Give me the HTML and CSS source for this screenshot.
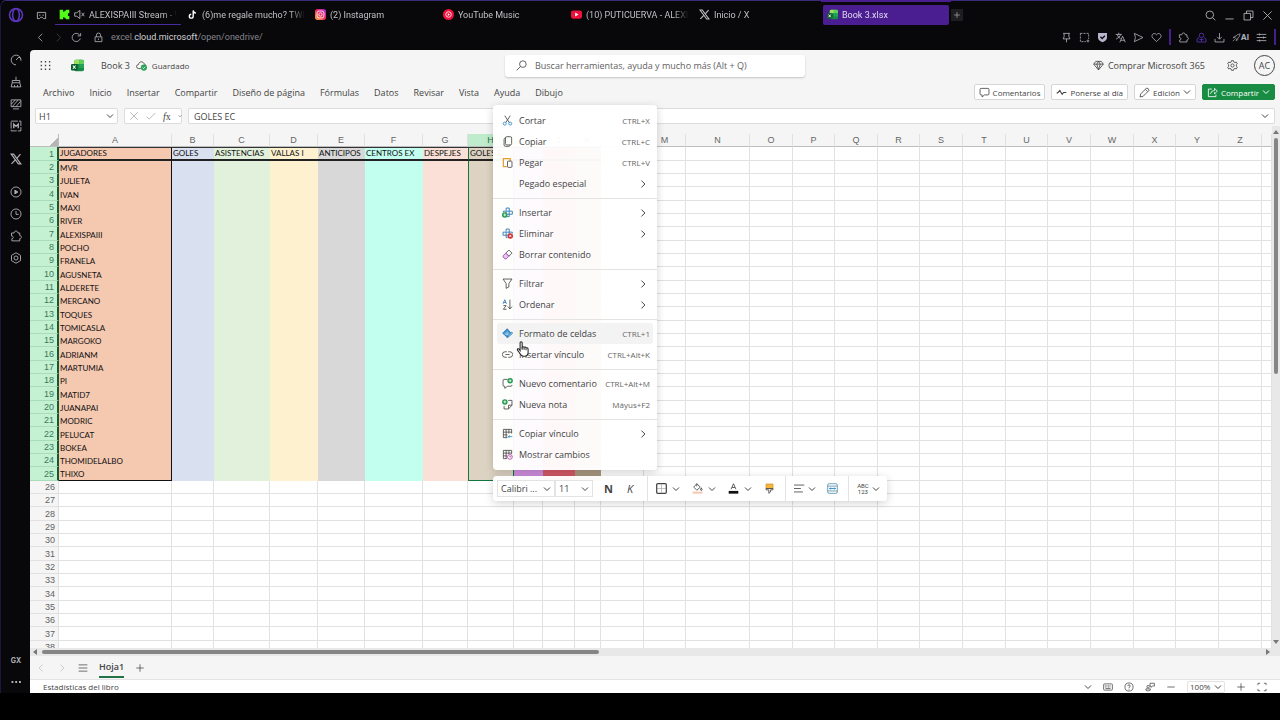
FILE: index.html
```html
<!DOCTYPE html>
<html lang="es">

<head>
  <meta charset="UTF-8">
  <meta name="viewport" content="width=device-width, initial-scale=1.0">
  <title>Book 3.xlsx</title>
  <link rel="stylesheet" href="styles.css">
</head>

<body>

  <!-- iconos -->
  <svg class="sprite" aria-hidden="true">
    <symbol id="opera" viewBox="0 0 16 16"><circle cx="8" cy="8" r="6.5"/><ellipse cx="8" cy="8" rx="3.4" ry="6.3"/></symbol>
    <symbol id="mask" viewBox="0 0 16 16"><path d="M2 3.5h12v9h-3l-2-2H7l-2 2H2z"/><path d="M4.5 7.5h2M9.5 7.5h2"/></symbol>
    <symbol id="down" viewBox="0 0 16 16"><path d="M2 5l6 6 6-6"/></symbol>
    <symbol id="left" viewBox="0 0 16 16"><path d="M10.5 2.5L5 8l5.5 5.5"/></symbol>
    <symbol id="right" viewBox="0 0 16 16"><path d="M5.5 2.5L11 8l-5.5 5.5"/></symbol>
    <symbol id="reload" viewBox="0 0 16 16"><path d="M13.5 9.5A6 6 0 1 1 12 3.7l1.7 1.7M14 1.5v4.200H9.5"/></symbol>
    <symbol id="lock" viewBox="0 0 16 16"><path d="M3 7h10v7H3zM5 7V4.5a3 3 0 0 1 6 0V7M8 9.5v2"/></symbol>
    <symbol id="plus" viewBox="0 0 16 16"><path d="M8 2v12M2 8h12"/></symbol>
    <symbol id="minus" viewBox="0 0 16 16"><path d="M2 8h12"/></symbol>
    <symbol id="close" viewBox="0 0 16 16"><path d="M2 2l12 12M14 2L2 14"/></symbol>
    <symbol id="check" viewBox="0 0 16 16"><path d="M1 9l4 4L15 3"/></symbol>
    <symbol id="search" viewBox="0 0 16 16"><circle cx="7" cy="7" r="5.5"/><path d="M11 11l4 4"/></symbol>
    <symbol id="lens" viewBox="0 0 16 16"><circle cx="10" cy="6" r="4.8"/><path d="M6.5 9.5L1 15"/></symbol>
    <symbol id="minimize" viewBox="0 0 16 16"><path d="M2 13h12"/></symbol>
    <symbol id="restore" viewBox="0 0 16 16"><path d="M1.500 5h9.500v9.500H1.500zM5 5V1.500h9.500V11H11"/></symbol>
    <symbol id="pin" viewBox="0 0 16 16"><path d="M3 2h10M4.500 2v5L3 10h10l-1.500-3V2M8 10v5"/></symbol>
    <symbol id="crop" viewBox="0 0 16 16"><path d="M2 2h12v8M2 2v12h8" stroke-dasharray="3 1.500"/><path d="M13 11v4M11 13h4"/></symbol>
    <symbol id="shield" viewBox="0 0 16 16"><path d="M1.500 1.500h13v7q0 4-6.500 6.500Q1.500 12.500 1.500 8.500z" fill="#b9b5cc" stroke="none"/><path d="M5 7l2.500 2.500L11.500 5.500" stroke="#0a090d" stroke-width="1.800"/></symbol>
    <symbol id="translate" viewBox="0 0 16 16"><path d="M1 3.500h9M5.500 1v2.500M8.500 3.500Q7 8 1.500 10.500M3 3.500Q4.500 8 8 9.500M7 15l4-9 4 9M8.500 12h5"/></symbol>
    <symbol id="send" viewBox="0 0 16 16"><path d="M2 2l12.500 6L2 14l1.500-6z"/></symbol>
    <symbol id="heart" viewBox="0 0 16 16"><path d="M8 14L2.500 8.500C-1 4.500 4.500-.5 8 4c3.500-4.500 9 .5 5.500 4.500z"/></symbol>
    <symbol id="puzzle" viewBox="0 0 16 16"><path d="M2 4h3.500c0-3.500 5-3.500 5 0H13v3.500c3 0 3 4 0 4V14.500H2.500V11.500c2.500 0 2.500-3.500-.5-3.500z"/></symbol>
    <symbol id="user" viewBox="0 0 16 16"><circle cx="8" cy="5" r="3.300"/><path d="M4.500 8L1.500 10v4.500h13V10l-3-2M5 11h6M8 9.500v4"/></symbol>
    <symbol id="download" viewBox="0 0 16 16"><path d="M8 1.500V10M4.500 7L8 10.500 11.500 7M1.500 10v4.500h13V10"/></symbol>
    <symbol id="rocket" viewBox="0 0 16 16"><path d="M14.500 1.500Q8 2 5 8l3 3q6-3 6.500-9.500zM5 8L2 8.500 5.500 4.500M8 11l-.5 3 4-3.500M1.500 14.500L5 11"/></symbol>
    <symbol id="sliders" viewBox="0 0 16 16"><path d="M1 3.500h14M1 8h14M1 12.500h14M5 2v3M11 6.500v3M5 11v3"/></symbol>
    <symbol id="speed" viewBox="0 0 16 16"><path d="M14.500 9A6.500 6.500 0 1 0 8 14.500M8 8l4-4M12 4l2.500 2.500"/></symbol>
    <symbol id="broom" viewBox="0 0 16 16"><path d="M8 1v5M3 6h10v3H3zM3 9l-1.500 5.500h13L13 9M6 14.500V12M10 14.500V12"/></symbol>
    <symbol id="hatch" viewBox="0 0 16 16"><path d="M1.500 2.500h13v9h-13zM2 8l5-5.500M3 11.500l8-9M8 11.500l6-7M4 14.500h8"/></symbol>
    <symbol id="mbox" viewBox="0 0 16 16"><path d="M1.500 1.500h13v13h-13z" stroke-dasharray="9 1.500"/><path d="M5 11V5.500l3 3 3-3V11" stroke-width="1.800"/></symbol>
    <symbol id="xlogo" viewBox="0 0 16 16"><path d="M1.500 1.500h3.300l9.700 13h-3.300z" stroke-width="1.600"/><path d="M14 1.500L9 7.200M7 9.200l-5 5.300" stroke-width="1.600"/></symbol>
    <symbol id="player" viewBox="0 0 16 16"><circle cx="8" cy="8" r="6.700"/><path d="M6.500 5.500v5l4-2.500z" fill="currentColor"/></symbol>
    <symbol id="clock" viewBox="0 0 16 16"><circle cx="8" cy="8" r="6.700"/><path d="M8 4v4.500h3.500"/></symbol>
    <symbol id="hex" viewBox="0 0 16 16"><path d="M8 1l6 3.500v7L8 15l-6-3.500v-7z"/><circle cx="8" cy="8" r="2.700"/></symbol>
    <symbol id="gear" viewBox="0 0 16 16"><path d="M6.500 1h3l.5 2 1.500.8 2-.8 1.500 2.600L13.500 7v2l1.500 1.400-1.500 2.600-2-.8-1.500.8-.5 2h-3L6 13l-1.500-.8-2 .8L1 10.400 2.500 9V7L1 5.600 2.500 3l2 .8L6 3z"/><circle cx="8" cy="8" r="2.300"/></symbol>
    <symbol id="dots" viewBox="0 0 16 16"><path d="M2 8h2.500M7 8h2.500M12 8h2.500" stroke-width="2.500"/></symbol>
    <symbol id="waffle" viewBox="0 0 16 16"><path d="M1 2.500h2M7 2.500h2M13 2.500h2M1 8h2M7 8h2M13 8h2M1 13.500h2M7 13.500h2M13 13.500h2" stroke-width="2.200"/></symbol>
    <symbol id="excel" viewBox="0 0 16 16"><g stroke="none"><rect x="4" y="1" width="12" height="14" rx="2" fill="#178a45"/><path d="M6 1h4v5H4V3q0-2 2-2z" fill="#9be05c"/><path d="M10 1h4q2 0 2 2v3h-6z" fill="#5fcf5a"/><path d="M10 6h6v5h-6z" fill="#23a455"/><rect y="6" width="8" height="8" rx="1.500" fill="#0b5c2d"/></g><path d="M2.300 8l3.400 4M5.700 8l-3.400 4" stroke="#fff" stroke-width="1.300"/></symbol>
    <symbol id="kick" viewBox="0 0 16 16"><path d="M1 1h5v3h2V2.500h2V1h5v5h-2v4h2v5h-5v-1.500H8V12H6v3H1z" fill="#53fc18" stroke="none"/></symbol>
    <symbol id="mute" viewBox="0 0 16 16"><path d="M1 5.500h3L8.500 2v12L4 10.500H1zM11 5.500l4 5M15 5.500l-4 5"/></symbol>
    <symbol id="tiktok" viewBox="0 0 16 16"><path d="M9 2v8.500a2.800 2.800 0 1 1-2.800-2.800M9 2q.5 3.500 4 4" stroke="#fff" stroke-width="2"/></symbol>
    <symbol id="insta" viewBox="0 0 16 16"><defs><linearGradient id="ig" x1="0" y1="1" x2="1" y2="0"><stop offset="0" stop-color="#ffb52e"/><stop offset=".5" stop-color="#f3265f"/><stop offset="1" stop-color="#a02be0"/></linearGradient></defs><rect width="16" height="16" rx="4" fill="url(#ig)" stroke="none"/><rect x="3" y="3" width="10" height="10" rx="3" stroke="#fff"/><circle cx="8" cy="8" r="2.400" stroke="#fff"/></symbol>
    <symbol id="ytm" viewBox="0 0 16 16"><circle cx="8" cy="8" r="8" fill="#f0103c" stroke="none"/><circle cx="8" cy="8" r="4" stroke="#fff"/><path d="M7 6v4l3-2z" fill="#fff" stroke="none"/></symbol>
    <symbol id="yt" viewBox="0 0 16 16"><rect y="2" width="16" height="12" rx="3" fill="#f0103c" stroke="none"/><path d="M6 5v6l5-3z" fill="#fff" stroke="none"/></symbol>
    <symbol id="saved" viewBox="0 0 16 16"><path d="M7 12.500H4a3 3 0 0 1-.3-6C4 1.500 11 1.500 12 6q1.500.3 2.300 1.500"/><circle cx="11.500" cy="11" r="4.500" fill="#2aa45a" stroke="none"/><path d="M9.500 11l1.500 1.500L13.500 10" stroke="#fff"/></symbol>
    <symbol id="gem" viewBox="0 0 16 16"><path d="M4 2h8l3 4-7 8.500L1 6zM1 6h14M5.500 6L8 14l2.500-8M5.500 6L8 2l2.500 4"/></symbol>
    <symbol id="chat" viewBox="0 0 16 16"><path d="M3 2h10q1.500 0 1.500 1.500V10q0 1.500-1.500 1.500H8L4.500 14.500v-3H3Q1.500 11.500 1.500 10V3.500Q1.500 2 3 2z"/></symbol>
    <symbol id="pulse" viewBox="0 0 16 16"><path d="M1 9l2-1L5.500 5l3.500 5.500L11 8h4" stroke-width="1.600"/></symbol>
    <symbol id="pencil" viewBox="0 0 16 16"><path d="M1.500 14.500l1-4.500L11 1.500q3 0 3.500 3.500L6 13.500zM9.500 3.500l3 3"/></symbol>
    <symbol id="share" viewBox="0 0 16 16"><path d="M7 3H2v11h11v-3M5 10q1-5 6-5V2l4 4-4 4V7.500"/></symbol>
    <symbol id="lines" viewBox="0 0 16 16"><path d="M1 3h14M1 8h14M1 13h14"/></symbol>
    <symbol id="cut" viewBox="0 0 16 16"><path d="M4 1l6.500 10M12 1L5.500 11"/><g stroke="#2b8ac9"><circle cx="4" cy="12.500" r="2.200"/><circle cx="12" cy="12.500" r="2.200"/></g></symbol>
    <symbol id="copy" viewBox="0 0 16 16"><rect x="5" y="1" width="9" height="12" rx="2"/><path d="M5 3Q3 3 3 5v8q0 2 2 2h5q1.500 0 2-2"/></symbol>
    <symbol id="paste" viewBox="0 0 16 16"><path d="M7 14H2V2.500h10V6M5 2.500h4" stroke="#e8a02c" stroke-width="1.800"/><rect x="8" y="6" width="6.500" height="9" rx="1" fill="#fff"/></symbol>
    <symbol id="ins" viewBox="0 0 16 16"><path d="M6 5V1.500h4.500V6H15v4.500h-4.500V14H6.500M6 6H2v2M6 6h4.500v4.500H6z" stroke="#2b76b5" stroke-width="1.300"/><circle cx="4" cy="11.500" r="4" fill="#23994d" stroke="none"/><path d="M4 9.500v4M2 11.500h4" stroke="#fff"/></symbol>
    <symbol id="del" viewBox="0 0 16 16"><path d="M6 5V1.500h4.500V6H15v2M6 6H1.500v4.500H6V14h2M6 6h4.500v4.500H6z" stroke="#2b76b5" stroke-width="1.300"/><circle cx="12" cy="11.500" r="4" fill="#d13438" stroke="none"/><path d="M10.500 10l3 3M13.500 10l-3 3" stroke="#fff"/></symbol>
    <symbol id="erase" viewBox="0 0 16 16"><path d="M10 1.500l4.500 4.500-4.500 4.500-4.500-4.500z"/><path d="M5.500 6l4.500 4.500-4 4H4.500L1.500 11.500V10z" fill="#e6c4ec" stroke="#a03fb5"/></symbol>
    <symbol id="filter" viewBox="0 0 16 16"><path d="M1.500 1.500h13L10 8v5l-4 2V8z"/></symbol>
    <symbol id="sort" viewBox="0 0 16 16"><path d="M1.500 7L4 1l2.500 6M2.300 5h3.400" stroke="#2b76b5"/><path d="M2 9.500h4L2 15h4.500M11.500 1v13M8.500 11l3 3.500 3-3.500"/></symbol>
    <symbol id="format" viewBox="0 0 16 16"><path d="M7.500 1l5.500 6.500-5.500 6L1 7.500z" fill="#2f8dcc" stroke="#2b76b5"/><path d="M3.500 7.500h8M7.500 4v7M4 9.500h7" stroke="#d8ecf8" stroke-width=".8"/><path d="M7.500 14l1-3L14 6l1.500 1.500-5.500 5z" fill="#9fd0ee" stroke="#2b76b5"/></symbol>
    <symbol id="link" viewBox="0 0 16 16"><path d="M7 4H4.500a4 4 0 0 0 0 8H7M9 4h2.500a4 4 0 0 1 0 8H9M5 8h6"/></symbol>
    <symbol id="comment" viewBox="0 0 16 16"><path d="M8 2H3Q1.500 2 1.500 4v6q0 2 1.500 2h1v3l4-3h5q1.500 0 1.500-2"/><circle cx="11.800" cy="4" r="4" fill="#23994d" stroke="none"/><path d="M11.800 2v4M9.800 4h4" stroke="#fff"/></symbol>
    <symbol id="note" viewBox="0 0 16 16"><path d="M9 2h5.500v7L9.500 14.500H3V10M14.500 9h-5v5"/><circle cx="4.200" cy="4.200" r="4" fill="#23994d" stroke="none"/><path d="M4.200 2.200v4M2.200 4.200h4" stroke="#fff"/></symbol>
    <symbol id="tablelink" viewBox="0 0 16 16"><path d="M8 14H2V2h12v6M2 6h12M2 10h6M6 2v12M10 2v6"/><path d="M9 12.500h6M11 10.500l-2 2 2 2" stroke="#2b8ac9"/></symbol>
    <symbol id="changes" viewBox="0 0 16 16"><path d="M7 14H2V2h12v5M2 6h12M2 10h5M6 2v12M10 2v5"/><circle cx="11.500" cy="11.500" r="3.500" fill="#fff" stroke="#b03fa5"/><path d="M11.500 9.500v2h2" stroke="#b03fa5"/></symbol>
    <symbol id="borders" viewBox="0 0 16 16"><path d="M8 2v12M2 8h12" stroke="#b5b5b5"/><rect x="1" y="1" width="14" height="14" rx="1.500" stroke-width="1.800"/></symbol>
    <symbol id="fill" viewBox="0 0 16 16"><path d="M7 1l5 5-5 4.500L2.500 6zM7 1v4M13.500 7q2.500 4 0 4t0-4"/><path d="M1 14h14" stroke="#f5c8b0" stroke-width="3"/></symbol>
    <symbol id="color" viewBox="0 0 16 16"><path d="M4.500 9L8 1l3.500 8M5.800 6.500h4.400"/><path d="M1 13.500h14" stroke="#111" stroke-width="4"/></symbol>
    <symbol id="brush" viewBox="0 0 16 16"><path d="M3 1.500h10V8H3z" fill="#f5b83d" stroke="#d9932a"/><path d="M3 8h10v2H9.500v3L7 15v-5H3z"/></symbol>
    <symbol id="align" viewBox="0 0 16 16"><path d="M0 3h15M0 8h10M0 13h13"/></symbol>
    <symbol id="merge" viewBox="0 0 16 16"><rect x="1" y="1" width="14" height="14" rx="2" stroke="#5a8ea8"/><path d="M1 4.500h14M1 11.500h14" stroke="#5a8ea8"/><path d="M3.500 8h9M5.500 6.500L4 8l1.500 1.500M10.500 6.500L12 8l-1.500 1.500" stroke="#1c84c6"/></symbol>
    <symbol id="keyboard" viewBox="0 0 16 16"><rect x="1" y="3" width="14" height="10" rx="1.500"/><path d="M3 6h10M3 8h10" stroke-dasharray="1.500 1"/><path d="M4 10.500h8"/></symbol>
    <symbol id="help" viewBox="0 0 16 16"><circle cx="8" cy="8" r="6.500"/><path d="M6 6.500q0-2 2-2t2 2q0 1-2 2.200V10M8 11v1.200"/></symbol>
    <symbol id="feedback" viewBox="0 0 16 16"><circle cx="5" cy="7.500" r="2"/><path d="M1.500 11h7v2q-3.500 3-7 0zM8 2h7v4.500h-3L9.500 8.500V6.500H8z"/></symbol>
    <symbol id="full" viewBox="0 0 16 16"><path d="M1.500 5V2H5M11 2h3.500v3M14.500 11v3H11M5 14H1.500v-3"/></symbol>
    <symbol id="hand" viewBox="0 0 16 20"><path d="M5 12V2.500q0-1.500 1.300-1.500T7.600 2.500V8q1-1.500 2.400 0 1.300-1 2.400.5 2.600-.5 2.600 2V14q0 5-4.500 5H9q-2.500 0-4-3l-3.500-5q0-2 2-1z" fill="#fff" stroke="#222" stroke-width="1.300"/><path d="M7.600 8v3M10 8.500V11M12.400 9v2.500" stroke="#222"/></symbol>
  </svg>

  <div class="browser">
    <aside class="sidebar">
      <button class="logo" aria-label="Opera"><svg><use href="#opera"/></svg></button>
      <button aria-label="Velocidad"><svg><use href="#speed"/></svg></button>
      <button aria-label="Limpiar"><svg><use href="#broom"/></svg></button>
      <button aria-label="Fondos"><svg><use href="#hatch"/></svg></button>
      <button aria-label="Mods"><svg><use href="#mbox"/></svg></button>
      <button class="apart" aria-label="X"><svg><use href="#xlogo"/></svg></button>
      <button class="apart" aria-label="Reproductor"><svg><use href="#player"/></svg></button>
      <button aria-label="Historial"><svg><use href="#clock"/></svg></button>
      <button aria-label="Extensiones"><svg><use href="#puzzle"/></svg></button>
      <button aria-label="Ajustes"><svg><use href="#hex"/></svg></button>
      <button class="bottom">GX</button>
      <button aria-label="Más"><svg><use href="#dots"/></svg></button>
    </aside>

    <div class="window">
      <div class="tabs">
        <button class="mask" aria-label="Privado"><svg><use href="#mask"/></svg></button>
        <a class="tab playing" href="#"><svg><use href="#kick"/></svg><svg class="mute"><use href="#mute"/></svg><span>ALEXISPAIII Stream - W</span></a>
        <a class="tab" href="#"><svg><use href="#tiktok"/></svg><span>(6)me regale mucho? TWI</span></a>
        <a class="tab" href="#"><svg><use href="#insta"/></svg><span>(2) Instagram</span></a>
        <a class="tab" href="#"><svg><use href="#ytm"/></svg><span>YouTube Music</span></a>
        <a class="tab" href="#"><svg><use href="#yt"/></svg><span>(10) PUTICUERVA - ALEXI</span></a>
        <a class="tab" href="#"><svg><use href="#xlogo"/></svg><span>Inicio / X</span></a>
        <a class="tab active" href="#"><svg><use href="#excel"/></svg><span>Book 3.xlsx</span></a>
        <button class="new-tab" aria-label="Nueva pestaña"><svg><use href="#plus"/></svg></button>
        <div class="win-buttons">
          <button aria-label="Buscar"><svg><use href="#search"/></svg></button>
          <button aria-label="Minimizar"><svg><use href="#minimize"/></svg></button>
          <button aria-label="Restaurar"><svg><use href="#restore"/></svg></button>
          <button aria-label="Cerrar"><svg><use href="#close"/></svg></button>
        </div>
      </div>

      <div class="address">
        <button aria-label="Atrás"><svg><use href="#left"/></svg></button>
        <button class="dim" aria-label="Adelante"><svg><use href="#right"/></svg></button>
        <button aria-label="Recargar"><svg><use href="#reload"/></svg></button>
        <button class="lock" aria-label="Seguridad"><svg><use href="#lock"/></svg></button>
        <a class="url" href="#">excel.<b>cloud.microsoft</b>/open/onedrive/</a>
        <button aria-label="Fijar"><svg><use href="#pin"/></svg></button>
        <button aria-label="Captura"><svg><use href="#crop"/></svg></button>
        <button aria-label="Bloqueador"><svg><use href="#shield"/></svg></button>
        <button aria-label="Traducir"><svg><use href="#translate"/></svg></button>
        <button aria-label="Enviar"><svg><use href="#send"/></svg></button>
        <button aria-label="Favorito"><svg><use href="#heart"/></svg></button>
        <i class="bar"></i>
        <button aria-label="Extensiones"><svg><use href="#puzzle"/></svg></button>
        <button class="violet" aria-label="Perfil"><svg><use href="#user"/></svg></button>
        <button aria-label="Descargas"><svg><use href="#download"/></svg></button>
        <button class="ai"><svg><use href="#rocket"/></svg>AI</button>
        <button aria-label="Menú"><svg><use href="#sliders"/></svg></button>
        <i class="bar"></i>
      </div>

      <div class="app">
        <header class="title-bar">
          <div class="doc">
            <button aria-label="Aplicaciones"><svg><use href="#waffle"/></svg></button>
            <svg class="app-icon"><use href="#excel"/></svg>
            <span class="name">Book 3</span>
            <svg class="cloud"><use href="#saved"/></svg>
            <span class="saved">Guardado</span>
          </div>
          <label class="search"><svg><use href="#lens"/></svg><input type="text" placeholder="Buscar herramientas, ayuda y mucho más (Alt + Q)"></label>
          <div class="account">
            <a href="#"><svg><use href="#gem"/></svg>Comprar Microsoft 365</a>
            <button aria-label="Configuración"><svg><use href="#gear"/></svg></button>
            <button class="avatar">AC</button>
          </div>
        </header>

        <div class="ribbon">
          <nav>
            <a href="#">Archivo</a><a href="#">Inicio</a><a href="#">Insertar</a><a href="#">Compartir</a><a href="#">Diseño de página</a><a href="#">Fórmulas</a><a href="#">Datos</a><a href="#">Revisar</a><a href="#">Vista</a><a href="#">Ayuda</a><a href="#">Dibujo</a>
          </nav>
          <button><svg><use href="#chat"/></svg>Comentarios</button>
          <button><svg><use href="#pulse"/></svg>Ponerse al día</button>
          <button><svg><use href="#pencil"/></svg>Edición<svg class="chev"><use href="#down"/></svg></button>
          <button class="green"><svg><use href="#share"/></svg>Compartir<svg class="chev"><use href="#down"/></svg></button>
        </div>

        <div class="formula">
          <div class="box name-box"><input type="text" aria-label="Cuadro de nombres" value="H1"><button aria-label="Nombres"><svg class="chev"><use href="#down"/></svg></button></div>
          <div class="box fx">
            <button class="off" aria-label="Cancelar"><svg><use href="#close"/></svg></button>
            <button class="off" aria-label="Aceptar"><svg><use href="#check"/></svg></button>
            <button class="fn"><i>f</i>x</button>
            <svg class="chev tiny"><use href="#down"/></svg>
          </div>
          <div class="box value"><input type="text" aria-label="Barra de fórmulas" value="GOLES EC"><button aria-label="Expandir"><svg class="chev"><use href="#down"/></svg></button></div>
        </div>

        <div class="sheet-area">
          <div class="sheet">
            <table>
              <colgroup id="cols"></colgroup>
              <thead><tr id="letters"></tr></thead>
              <tbody id="rows"></tbody>
            </table>
          </div>
          <div class="vscroll"><span class="up"></span><span class="thumb"></span><span class="dn"></span></div>
          <div class="hscroll"><span class="lt"></span><span class="thumb"></span><span class="rt"></span></div>

          <div class="menu">
            <div class="group">
              <button><svg><use href="#cut"/></svg>Cortar<kbd>CTRL+X</kbd></button>
              <button><svg><use href="#copy"/></svg>Copiar<kbd>CTRL+C</kbd></button>
              <button><svg><use href="#paste"/></svg>Pegar<kbd>CTRL+V</kbd></button>
              <button><svg></svg>Pegado especial<svg class="sub"><use href="#right"/></svg></button>
            </div>
            <div class="group">
              <button><svg><use href="#ins"/></svg>Insertar<svg class="sub"><use href="#right"/></svg></button>
              <button><svg><use href="#del"/></svg>Eliminar<svg class="sub"><use href="#right"/></svg></button>
              <button><svg><use href="#erase"/></svg>Borrar contenido</button>
            </div>
            <div class="group">
              <button><svg><use href="#filter"/></svg>Filtrar<svg class="sub"><use href="#right"/></svg></button>
              <button><svg><use href="#sort"/></svg>Ordenar<svg class="sub"><use href="#right"/></svg></button>
            </div>
            <div class="group">
              <button class="hover"><svg><use href="#format"/></svg>Formato de celdas<kbd>CTRL+1</kbd></button>
              <button><svg><use href="#link"/></svg>Insertar vínculo<kbd>CTRL+Alt+K</kbd></button>
            </div>
            <div class="group">
              <button><svg><use href="#comment"/></svg>Nuevo comentario<kbd>CTRL+Alt+M</kbd></button>
              <button><svg><use href="#note"/></svg>Nueva nota<kbd>Máyus+F2</kbd></button>
            </div>
            <div class="group">
              <button><svg><use href="#tablelink"/></svg>Copiar vínculo<svg class="sub"><use href="#right"/></svg></button>
              <button><svg><use href="#changes"/></svg>Mostrar cambios</button>
            </div>
            <svg class="cursor"><use href="#hand"/></svg>
          </div>

          <div class="mini-bar">
            <label class="pick font"><select aria-label="Fuente"><option>Calibri ...</option></select><svg class="chev"><use href="#down"/></svg></label>
            <label class="pick size"><select aria-label="Tamaño"><option>11</option></select><svg class="chev"><use href="#down"/></svg></label>
            <button class="bold">N</button>
            <button class="italic">K</button>
            <button class="sep"><svg><use href="#borders"/></svg><svg class="chev"><use href="#down"/></svg></button>
            <button><svg><use href="#fill"/></svg><svg class="chev"><use href="#down"/></svg></button>
            <button><svg><use href="#color"/></svg><svg class="chev"><use href="#down"/></svg></button>
            <button aria-label="Copiar formato"><svg><use href="#brush"/></svg></button>
            <button class="sep tight"><svg><use href="#align"/></svg><svg class="chev"><use href="#down"/></svg></button>
            <button aria-label="Combinar"><svg><use href="#merge"/></svg></button>
            <button class="sep tight"><span class="abc">ABC<br>123</span><svg class="chev"><use href="#down"/></svg></button>
          </div>
        </div>

        <div class="sheet-tabs">
          <button class="dim" aria-label="Anterior"><svg><use href="#left"/></svg></button>
          <button class="dim" aria-label="Siguiente"><svg><use href="#right"/></svg></button>
          <button aria-label="Todas las hojas"><svg><use href="#lines"/></svg></button>
          <a class="current" href="#">Hoja1</a>
          <button aria-label="Nueva hoja"><svg><use href="#plus"/></svg></button>
        </div>

        <footer class="status">
          <span>Estadísticas del libro</span>
          <button aria-label="Opciones"><svg class="chev"><use href="#down"/></svg></button>
          <button aria-label="Teclado"><svg><use href="#keyboard"/></svg></button>
          <button aria-label="Ayuda"><svg><use href="#help"/></svg></button>
          <button aria-label="Comentarios"><svg><use href="#feedback"/></svg></button>
          <button aria-label="Alejar"><svg><use href="#minus"/></svg></button>
          <label class="pick zoom"><select aria-label="Zoom"><option>100%</option></select><svg class="chev"><use href="#down"/></svg></label>
          <button aria-label="Acercar"><svg><use href="#plus"/></svg></button>
          <button aria-label="Pantalla completa"><svg><use href="#full"/></svg></button>
        </footer>
      </div>
    </div>
  </div>

  <script>
    const widths = [29, 113, 42, 56, 48, 47, 58, 45, 46, 29, 32, 26, 43, 42, 64, 43, 42, 43, 42, 43, 43, 42, 43, 43, 42, 43, 43];
    const letters = 'ABCDEFGHIJKLMNOPQRSTUVWXYZ'.split('');
    const titles = ['JUGADORES', 'GOLES', 'ASISTENCIAS', 'VALLAS I', 'ANTICIPOS', 'CENTROS EX', 'DESPEJES', 'GOLES EC'];
    const players = ['MVR', 'JULIETA', 'IVAN', 'MAXI', 'RIVER', 'ALEXISPAIII', 'POCHO', 'FRANELA', 'AGUSNETA', 'ALDERETE', 'MERCANO', 'TOQUES',
      'TOMICASLA', 'MARGOKO', 'ADRIANM', 'MARTUMIA', 'PI', 'MATID7', 'JUANAPAI', 'MODRIC', 'PELUCAT', 'BOKEA', 'THOMIDELALBO', 'THIXO'];
    const filled = 11;

    document.getElementById('cols').innerHTML = widths.map(w => `<col style="width: ${w}px">`).join('') + '<col>';
    document.getElementById('letters').innerHTML = '<th class="corner"></th>' +
      letters.map(l => `<th class="${l === 'H' ? 'selected' : ''}">${l}</th>`).join('') + '<th></th>';

    let html = '';
    for (let r = 1; r <= 38; r++) {
      html += `<tr class="${r <= 25 ? 'data' : ''}"><th>${r}</th>`;
      for (let c = 0; c <= 26; c++) {
        const color = r <= 25 && c < filled ? 'c' + letters[c] : '';
        let text = '';
        if (r === 1) text = titles[c] || '';
        else if (c === 0) text = players[r - 2] || '';
        html += `<td class="${color}">${text}</td>`;
      }
      html += '</tr>';
    }
    document.getElementById('rows').innerHTML = html;
  </script>

</body>
</html>
```
FILE: styles.css
```css
* {
  box-sizing: border-box;
}

body {
  margin: 0;
  background-color: #000;
  font-family: 'Open Sans', 'Noto Sans', sans-serif;
  font-size: 9px;
  color: #444;
}

button,
input,
select {
  font: inherit;
  color: inherit;
  background: none;
  border: none;
  margin: 0;
  padding: 0;
  outline: none;
}

button {
  display: flex;
  align-items: center;
  justify-content: center;
  white-space: nowrap;
}

a {
  color: inherit;
  text-decoration: none;
}

svg {
  width: 11px;
  height: 11px;
  flex: none;
  fill: none;
  stroke: currentColor;
  stroke-width: 1.2;
}

.sprite {
  position: absolute;
  width: 0;
  height: 0;
}

.chev {
  width: 8px;
  height: 8px;
  stroke-width: 2;
}

/* navegador */
.browser {
  display: flex;
  height: 100vh;
  padding-bottom: 27px;
  background-color: #000;
}

.sidebar {
  display: flex;
  flex-direction: column;
  width: 30px;
  padding-left: 1px;
  background-color: #08080b;
  border-left: 1px solid #1d1640;
  border-top: 1px solid #3a2a78;
  border-top-left-radius: 6px;
  color: #b0b0b6;
}

.sidebar button {
  height: 22px;
}

.sidebar svg {
  width: 12px;
  height: 12px;
}

.sidebar .logo {
  height: 28px;
  margin-bottom: 20px;
  color: #5b35b8;
}

.sidebar .logo svg {
  width: 16px;
  height: 16px;
  stroke-width: 1.6;
}

.sidebar .apart {
  margin-top: 11px;
}

.sidebar .bottom {
  margin-top: auto;
  font-family: Inter, sans-serif;
  font-size: 7px;
  font-weight: bold;
}

.window {
  flex: 1;
  min-width: 0;
  display: flex;
  flex-direction: column;
  background-color: #08080a;
}

.tabs {
  display: flex;
  align-items: center;
  gap: 2px;
  height: 27px;
  padding: 2px 7px 0 5px;
  border-top: 1px solid #3a2a78;
  font-family: Roboto, sans-serif;
  color: #c0c0c5;
}

.mask {
  width: 12px;
  margin-right: 6px;
}

.tab {
  position: relative;
  display: flex;
  align-items: center;
  gap: 4px;
  flex: 0 1 126px;
  min-width: 0;
  height: 20px;
  padding: 0 4px;
  border-bottom: 1px solid transparent;
}

.tab span {
  flex: 1;
  overflow: hidden;
  white-space: nowrap;
  -webkit-mask-image: linear-gradient(to right, #000 85%, transparent);
  mask-image: linear-gradient(to right, #000 85%, transparent);
}

.tab.playing {
  border-color: #4a2aa0;
}

.tab.active {
  background-color: #4a1e90;
  border-radius: 2px;
  color: #e0d8f0;
}

/* linea superior de la pestaña activa */
.tab.active::before {
  content: '';
  position: absolute;
  top: -5px;
  left: -2px;
  right: -2px;
  height: 2px;
  background-color: #4a1e90;
}

.new-tab {
  width: 12px;
  height: 12px;
  background-color: #1d1d22;
}

.new-tab svg {
  width: 8px;
  height: 8px;
}

.win-buttons {
  display: flex;
  gap: 8px;
  margin-left: auto;
}

.address {
  display: flex;
  align-items: center;
  gap: 7px;
  height: 23px;
  padding: 0 4px 3px 5px;
  color: #b0b0b8;
}

.address .dim {
  color: #444;
}

.address .lock {
  margin-left: 4px;
}

.url {
  flex: 1;
  font-family: Roboto, sans-serif;
  font-size: 9px;
  color: #85858c;
}

.url b {
  font-weight: normal;
  color: #d2d2d6;
}

.bar {
  width: 2px;
  height: 16px;
  background-color: #43218c;
}

.address .violet {
  color: #5b35b8;
}

.address .ai {
  font-family: Inter, sans-serif;
  font-size: 8px;
  font-weight: bold;
}

.address .ai svg {
  width: 9px;
  height: 9px;
}

/* excel */
.app {
  flex: 1;
  min-height: 0;
  display: flex;
  flex-direction: column;
  background-color: #f5f5f5;
  border-top-left-radius: 4px;
  overflow: hidden;
}

.title-bar {
  display: grid;
  grid-template-columns: 1fr 300px 1fr;
  align-items: center;
  height: 31px;
  padding: 0 5px;
}

.doc {
  display: flex;
  align-items: center;
  padding-left: 5px;
}

.app-icon {
  width: 13px;
  height: 13px;
  margin: 0 17px 0 20px;
}

.cloud {
  margin: 0 5px 0 6px;
}

.name {
  font-size: 9px;
}

.saved {
  font-size: 8px;
}

.search {
  display: flex;
  align-items: center;
  gap: 8px;
  height: 22px;
  padding: 0 11px;
  background-color: #fff;
  border-radius: 3px;
  box-shadow: 0 1px 2px rgba(0, 0, 0, 0.2);
}

.search input {
  flex: 1;
}

.search input::placeholder {
  color: #616161;
}

.account {
  display: flex;
  align-items: center;
  justify-content: flex-end;
  gap: 16px;
}

.account a {
  display: flex;
  align-items: center;
  gap: 4px;
  margin-right: 6px;
}

.avatar {
  width: 21px;
  height: 21px;
  border: 1px solid #444;
  border-radius: 50%;
}

.ribbon {
  display: flex;
  align-items: center;
  gap: 6px;
  height: 22px;
  padding: 0 5px 0 13px;
}

.ribbon nav {
  display: flex;
  gap: 15px;
  flex: 1;
}

.ribbon button {
  gap: 3px;
  height: 16px;
  padding: 0 4px;
  background-color: #fff;
  border: 1px solid #d6d6d6;
  border-radius: 2px;
  font-size: 8px;
}

.ribbon .green {
  background-color: #198c43;
  border-color: #198c43;
  color: #fff;
}

.formula {
  display: flex;
  gap: 6px;
  padding: 5px 5px 2px;
}

.box {
  display: flex;
  align-items: center;
  height: 16px;
  padding: 0 3px;
  background-color: #fff;
  border: 1px solid #dcdcdc;
  border-radius: 2px;
}

.box input {
  flex: 1;
  min-width: 0;
}

.name-box {
  width: 83px;
}

.fx {
  width: 58px;
  gap: 7px;
  padding: 0 2px 0 4px;
}

.fx .off {
  color: #a5a5a5;
}

.fx .off svg {
  width: 10px;
  height: 10px;
}

.chev.tiny {
  width: 4px;
  height: 4px;
}

.fn {
  font-family: 'Liberation Serif', serif;
  font-size: 10px;
}

.value {
  flex: 1;
  padding: 0 5px;
}

/* hoja */
.sheet-area {
  position: relative;
  flex: 1;
  min-height: 0;
  display: grid;
  grid-template: 1fr 8px / 1fr 8px;
}

.sheet {
  min-width: 0;
  min-height: 0;
  padding-top: 8px;
  overflow: hidden;
}

table {
  width: 100%;
  table-layout: fixed;
  border-collapse: separate;
  border-spacing: 0;
}

th,
td {
  height: 13px;
  padding: 0;
  overflow: hidden;
  line-height: 12px;
  vertical-align: bottom;
  border-right: 1px solid #e1e1e1;
  border-bottom: 1px solid #e1e1e1;
}

thead th {
  font-family: 'Liberation Sans', sans-serif;
  font-weight: normal;
  color: #666;
  border-bottom-color: #bdbdbd;
}

thead .selected {
  background-color: #bfeccd;
  color: #1c7443;
}

thead .corner {
  background: linear-gradient(135deg, transparent 50%, #b5b5b5 50%) right bottom / 8px 8px no-repeat;
  border-right-color: #bdbdbd;
}

tbody th {
  padding-right: 3px;
  font-family: 'Liberation Sans', sans-serif;
  font-weight: normal;
  text-align: right;
  color: #616161;
}

tbody tr:nth-child(3n + 1) td,
tbody tr:nth-child(3n + 1) th {
  height: 14px;
}

tbody td {
  padding-left: 1px;
  background-color: #fff;
  font-family: Lato, sans-serif;
  font-size: 8px;
  color: #111;
  white-space: nowrap;
}

.data th {
  background-color: #c4f1d2;
  border-bottom-color: #a9dcb9;
  border-right: 2px solid #14592f;
  color: #39795a;
}

.data .cA { background-color: #f5c8b0; border-color: #111; }
.data .cB { background-color: #d9e0f0; }
.data .cC { background-color: #e2f1dc; }
.data .cD { background-color: #fdf1cf; }
.data .cE { background-color: #d8d8d8; }
.data .cF { background-color: #c2ffef; }
.data .cG { background-color: #fae0d6; }
.data .cH { background-color: #ddd3c2; }
.data .cI { background-color: #cf8fdf; }
.data .cJ { background-color: #d65868; }
.data .cK { background-color: #ab9a82; }

.data td[class^="c"] {
  border-bottom-width: 0;
  border-right-width: 0;
}

.data td.cA {
  border-right-width: 1px;
}

.data td.cH {
  border-left: 1px solid #14753f;
  border-right: 1px solid #14753f;
}

tbody tr:first-child td[class^="c"] {
  line-height: 11px;
  border-top: 1px solid #333;
  border-bottom: 2px solid #222;
}

tbody tr:nth-child(25) td.cA {
  border-bottom: 1px solid #111;
}

tbody tr:nth-child(25) td.cH {
  border-bottom: 1px solid #14753f;
}

.vscroll,
.hscroll {
  display: flex;
  align-items: center;
  background-color: #e8e8e8;
}

.vscroll {
  flex-direction: column;
  padding: 4px 0;
}

.hscroll {
  grid-column: 1 / 3;
  padding: 0 10px 0 3px;
}

.vscroll .thumb {
  width: 4px;
  height: 46%;
  margin: 4px 0 auto;
  border-radius: 2px;
  background-color: #858585;
}

.hscroll .thumb {
  width: 45%;
  height: 4px;
  margin: 0 auto 0 5px;
  border-radius: 2px;
  background-color: #858585;
}

.up,
.dn,
.lt,
.rt {
  border: 3px solid transparent;
}

.up {
  border-top-width: 0;
  border-bottom: 4px solid #777;
}

.dn {
  border-bottom-width: 0;
  border-top: 4px solid #777;
}

.lt {
  border-left-width: 0;
  border-right: 4px solid #777;
}

.rt {
  border-right-width: 0;
  border-left: 4px solid #777;
}

/* menu contextual */
.menu {
  position: absolute;
  top: -21px;
  left: 463px;
  width: 164px;
  padding: 2px 0 1px;
  background-color: rgba(255, 255, 255, 0.96);
  border-radius: 4px;
  box-shadow: 0 2px 8px rgba(0, 0, 0, 0.18);
}

.group {
  padding: 3px 4px 4px;
}

.group + .group {
  border-top: 1px solid #e3e3e3;
}

.menu button {
  gap: 6px;
  width: 100%;
  height: 21px;
  padding: 0 3px 0 5px;
  border-radius: 3px;
}

.menu kbd {
  margin-left: auto;
  font-family: inherit;
  font-size: 8px;
  color: #666;
}

.menu button:not(:has(kbd)) {
  justify-content: flex-start;
}

.menu .sub {
  width: 10px;
  height: 10px;
  margin: 0 2px 0 auto;
  stroke-width: 1.6;
}

.menu .hover {
  background-color: #f3f3f3;
}

.cursor {
  position: absolute;
  top: 236px;
  left: 23px;
  width: 13px;
  height: 16px;
}

.mini-bar {
  position: absolute;
  top: 350px;
  left: 463px;
  display: flex;
  align-items: center;
  height: 25px;
  padding: 0 2px 0 4px;
  background-color: rgba(255, 255, 255, 0.96);
  border-radius: 4px;
  box-shadow: 0 2px 8px rgba(0, 0, 0, 0.18);
}

.mini-bar button {
  gap: 5px;
  height: 25px;
  padding: 0 6px;
}

.mini-bar .sep {
  padding-left: 8px;
  border-left: 1px solid #e3e3e3;
}

.mini-bar .tight {
  gap: 3px;
  padding-right: 5px;
}

.mini-bar button:has(+ .sep) {
  padding-right: 10px;
}

.pick {
  display: flex;
  align-items: center;
  border: 1px solid #e3e3e3;
}

.pick select {
  flex: 1;
  min-width: 0;
  appearance: none;
}

.mini-bar .pick {
  height: 17px;
  padding: 0 3px;
}

.font {
  width: 58px;
}

.size {
  width: 38px;
}

.mini-bar .bold {
  padding-left: 11px;
  font-size: 11px;
  font-weight: bold;
}

.mini-bar .italic {
  padding-left: 8px;
  font-size: 11px;
  font-style: italic;
}

.mini-bar .italic:has(+ .sep) {
  padding-right: 14px;
}

.abc {
  font-family: Roboto, sans-serif;
  font-size: 6px;
  line-height: 6px;
}

/* pie */
.sheet-tabs {
  display: flex;
  align-items: center;
  gap: 11px;
  height: 23px;
  padding: 0 6px;
}

.sheet-tabs .dim {
  color: #bbb;
}

.sheet-tabs svg {
  width: 10px;
  height: 10px;
}

.sheet-tabs .current {
  height: 20px;
  line-height: 18px;
  font-weight: 600;
  border-bottom: 2px solid #217346;
}

.status {
  display: flex;
  align-items: center;
  gap: 11px;
  height: 14px;
  padding: 0 13px;
  background-color: #fff;
  border-top: 1px solid #e3e3e3;
  font-size: 8px;
}

.status span {
  margin-right: auto;
}

.status svg {
  width: 10px;
  height: 10px;
}

.status .chev {
  width: 8px;
  height: 8px;
}

.status .zoom {
  width: 38px;
  height: 12px;
  padding: 0 2px;
  border-radius: 2px;
}
```
